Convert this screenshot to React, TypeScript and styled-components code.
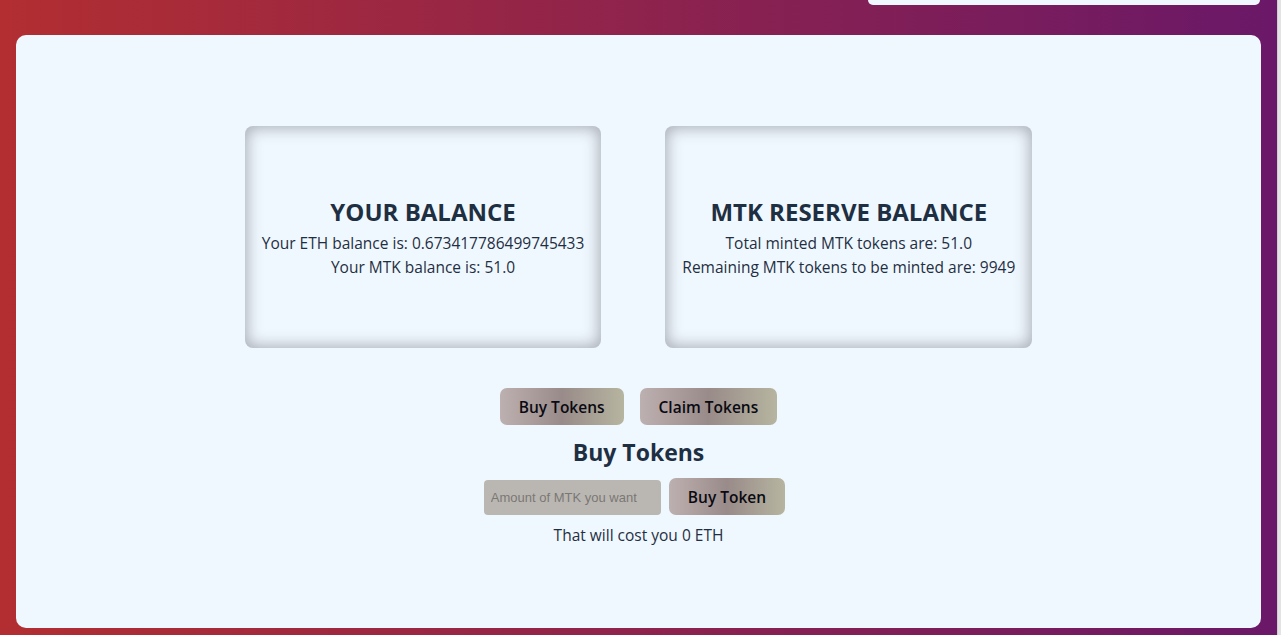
import React from "react";
import styled, { createGlobalStyle } from "styled-components";

const Global = createGlobalStyle`
  html, body { margin: 0; padding: 0; height: 100%; overflow: hidden; }
  body { font-family: "Open Sans", "Noto Sans", sans-serif; }
  * { box-sizing: border-box; }
`;

const Root = styled.div`
  display: flex;
  height: 635px;
  width: 1281px;
  overflow: hidden;
`;

const Page = styled.div`
  flex: 1;
  display: flex;
  flex-direction: column;
  gap: 30px;
  padding: 0 16px;
  background: linear-gradient(to right, #b22e31, #6a1868);
`;

const ScrollTrack = styled.div`
  width: 4px;
  background: #e3e3e3;
  border-left: 1px solid #cfcfcf;
`;

const TopBar = styled.div`
  display: flex;
  justify-content: flex-end;
`;

const TopCard = styled.div`
  width: 392px;
  height: 5px;
  margin-right: 1px;
  background: #f0f8ff;
  border-radius: 0 0 7px 7px;
`;

const MainCard = styled.main`
  height: 593px;
  background: #f0f8ff;
  border-radius: 10px;
  display: flex;
  flex-direction: column;
  align-items: center;
  padding-top: 91px;
  color: #1f2f42;
`;

const CardRow = styled.div`
  display: flex;
  gap: 64px;
`;

const BalanceCard = styled.section`
  height: 222px;
  padding: 2px 17px 0;
  border-radius: 8px;
  box-shadow: inset 0 0 15px 2px rgba(60, 60, 64, 0.4);
  display: flex;
  flex-direction: column;
  justify-content: center;
  align-items: center;
  text-align: center;
`;

const CardTitle = styled.h2`
  margin: 0 0 4px;
  font-size: 24px;
  font-weight: 700;
  line-height: 30px;
`;

const Line = styled.p`
  margin: 0;
  font-size: 15.5px;
  line-height: 24px;
`;

const TabRow = styled.div`
  display: flex;
  gap: 16px;
  margin-top: 40px;
`;

const GradButton = styled.button`
  height: 37px;
  padding: 0 19px;
  border: none;
  border-radius: 7px;
  background: linear-gradient(to right, #bdb0b0, #998b89 50%, #b6b5a0);
  color: #0a0a12;
  font-family: inherit;
  font-size: 15.5px;
  font-weight: 600;
  cursor: pointer;
`;

const SectionTitle = styled.h3`
  margin: 13px 0 0;
  font-size: 23px;
  line-height: 28px;
  font-weight: 700;
`;

const BuyRow = styled.div`
  display: flex;
  align-items: flex-end;
  gap: 8px;
  margin-top: 12px;
  padding-right: 8px;
`;

const AmountInput = styled.input`
  width: 177px;
  height: 35px;
  border: none;
  border-radius: 4px;
  background: #bab7b2;
  padding: 0 7px;
  font-family: "Liberation Sans", Arial, sans-serif;
  font-size: 13px;
  color: #333;
  &::placeholder { color: #7a7775; }
  outline: none;
`;

const CostText = styled.p`
  margin: 8px 0 0;
  font-size: 15.5px;
  line-height: 24px;
`;

export default function App() {
  return (
    <Root>
      <Global />
      <Page>
        <TopBar>
          <TopCard />
        </TopBar>
        <MainCard>
          <CardRow>
            <BalanceCard>
              <CardTitle>YOUR BALANCE</CardTitle>
              <Line>Your ETH balance is: 0.673417786499745433</Line>
              <Line>Your MTK balance is: 51.0</Line>
            </BalanceCard>
            <BalanceCard>
              <CardTitle>MTK RESERVE BALANCE</CardTitle>
              <Line>Total minted MTK tokens are: 51.0</Line>
              <Line>Remaining MTK tokens to be minted are: 9949</Line>
            </BalanceCard>
          </CardRow>
          <TabRow>
            <GradButton>Buy Tokens</GradButton>
            <GradButton>Claim Tokens</GradButton>
          </TabRow>
          <SectionTitle>Buy Tokens</SectionTitle>
          <BuyRow>
            <AmountInput placeholder="Amount of MTK you want" />
            <GradButton>Buy Token</GradButton>
          </BuyRow>
          <CostText>That will cost you 0 ETH</CostText>
        </MainCard>
      </Page>
      <ScrollTrack />
    </Root>
  );
}
